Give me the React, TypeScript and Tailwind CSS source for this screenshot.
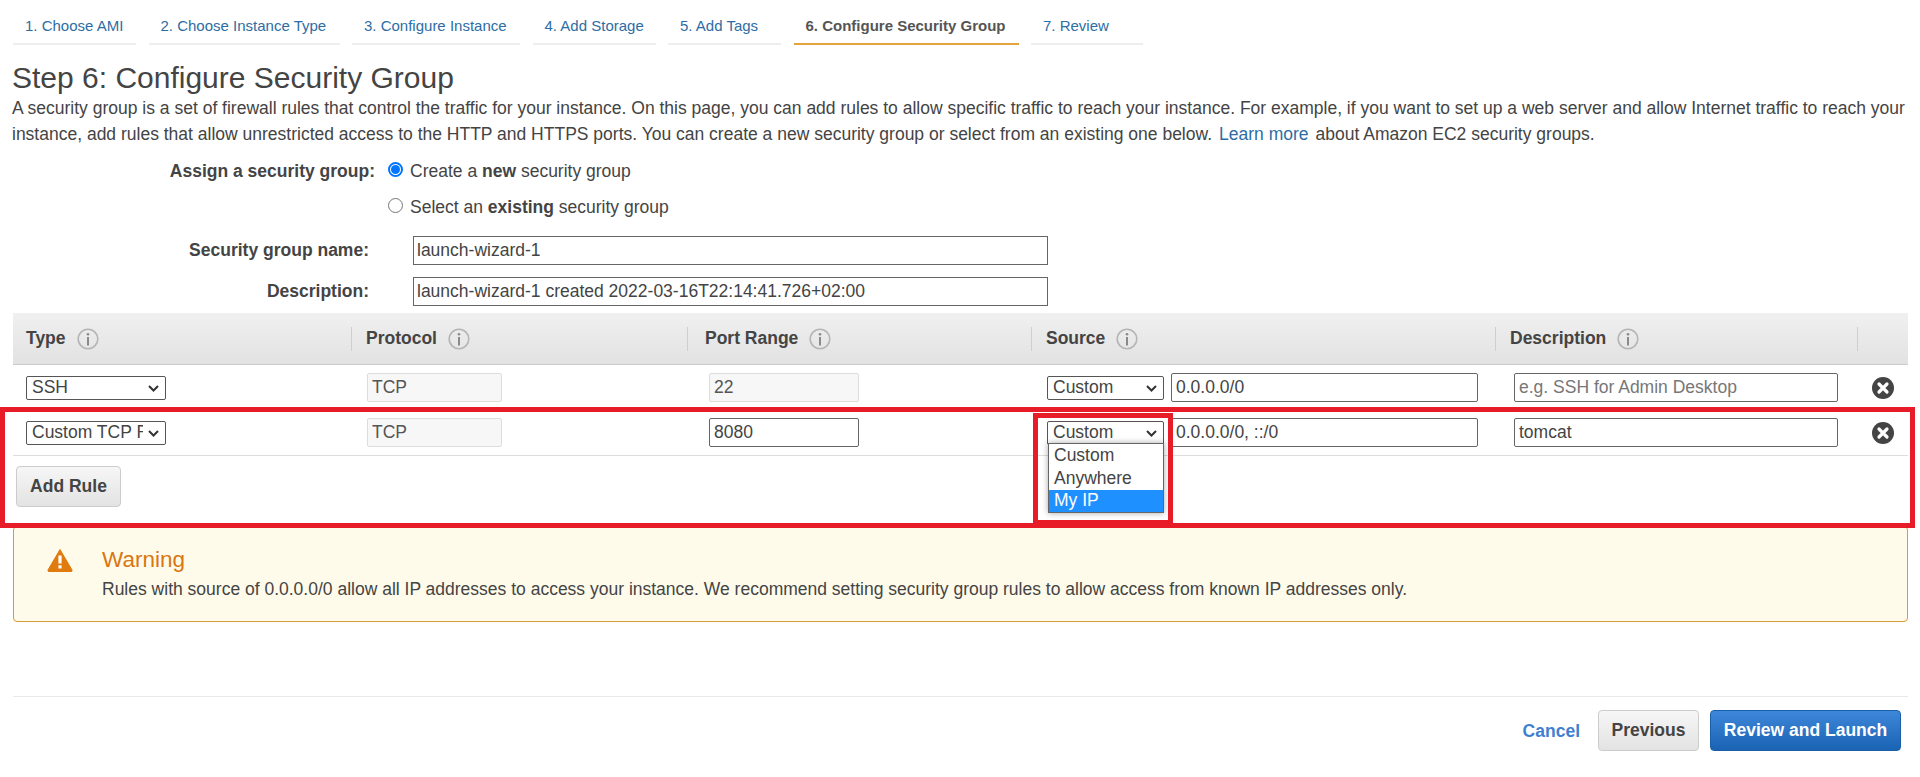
import { ReactNode } from "react";

const tabs = [
  { label: "1. Choose AMI", w: "w-[123px]" },
  { label: "2. Choose Instance Type", w: "w-[191px]" },
  { label: "3. Configure Instance", w: "w-[168px]" },
  { label: "4. Add Storage", w: "w-[123px]" },
  { label: "5. Add Tags", w: "w-[113px]" },
  { label: "6. Configure Security Group", w: "w-[225px]", active: true },
  { label: "7. Review", w: "w-[112px]" },
];

const fieldCls =
  "h-[29px] border border-[#666] rounded-[2px] px-[4px] text-[17.5px] text-[#444] bg-white placeholder:text-[#777]";
const lockedCls =
  "h-[29px] border border-[#ddd] rounded-[2px] px-[4px] text-[17.5px] text-[#555] bg-[#f7f7f7]";
const selectCls =
  "appearance-none h-[24px] border border-[#555] rounded-[2px] pl-[5px] pr-[22px] pb-[2px] text-[17.5px] leading-[20px] text-[#444] bg-white";

function InfoIcon() {
  return (
    <svg width="22" height="22" viewBox="0 0 22 22" className="shrink-0">
      <circle cx="11" cy="11" r="9.8" fill="none" stroke="#b5b5b5" strokeWidth="1.6" />
      <circle cx="11" cy="6.2" r="1.3" fill="#8a8a8a" />
      <rect x="10" y="9" width="2" height="8.5" fill="#8a8a8a" />
    </svg>
  );
}

function RemoveIcon() {
  return (
    <svg width="22" height="22" viewBox="0 0 22 22">
      <circle cx="11" cy="11" r="11" fill="#444" />
      <path d="M7 7l8 8M15 7l-8 8" stroke="#fff" strokeWidth="3.2" strokeLinecap="round" />
    </svg>
  );
}

function WarningIcon() {
  return (
    <svg width="26" height="24" viewBox="0 0 26 24">
      <path
        d="M13 1.5 L25 22 Q25.5 23.5 24 23.5 L2 23.5 Q0.5 23.5 1 22 Z"
        fill="#e07b0f"
        stroke="#e07b0f"
        strokeLinejoin="round"
      />
      <rect x="11.4" y="7.5" width="3.2" height="8" fill="#fff" />
      <rect x="11.4" y="17.3" width="3.2" height="3.2" fill="#fff" />
    </svg>
  );
}

function Radio({ checked }: { checked?: boolean }) {
  return (
    <span
      className={
        checked
          ? "w-[15px] h-[15px] rounded-full border-2 border-[#0075ff] flex items-center justify-center bg-white"
          : "w-[15px] h-[15px] rounded-full border border-[#767676] bg-white"
      }
    >
      {checked && <span className="w-[9px] h-[9px] rounded-full bg-[#0075ff]" />}
    </span>
  );
}

function Select({ value, options, width }: { value: string; options: string[]; width: string }) {
  return (
    <span className="relative inline-flex">
      <select defaultValue={value} className={`${selectCls} ${width}`}>
        {options.map((o) => (
          <option key={o}>{o}</option>
        ))}
      </select>
      <svg width="11" height="7" viewBox="0 0 11 7" className="absolute right-[7px] top-[9px] pointer-events-none">
        <path d="M1 1l4.5 4.5L10 1" fill="none" stroke="#333" strokeWidth="2" />
      </svg>
    </span>
  );
}

function HeaderCell({ children, pad = "pl-[14px]", divider = true }: { children?: ReactNode; pad?: string; divider?: boolean }) {
  return (
    <div
      className={`h-[24px] flex items-center gap-[11px] font-bold text-[17.5px] text-[#444] ${pad} ${divider ? "border-r border-[#cfcfcf]" : ""}`}
    >
      {children}
    </div>
  );
}

function Rule({ type, port, portLocked, source, description, open }: {
  type: string;
  port: string;
  portLocked?: boolean;
  source: string;
  description?: string;
  open?: boolean;
}) {
  return (
    <div className="grid grid-cols-[339px_336px_344px_464px_362px_50px] h-[45px] items-center">
      <div className="pl-[13px] flex">
        <Select value={type} options={["SSH", "Custom TCP Rule"]} width="w-[140px]" />
      </div>
      <div className="pl-[15px]">
        <input readOnly value="TCP" className={`${lockedCls} w-[135px]`} />
      </div>
      <div className="pl-[21px]">
        <input readOnly value={port} className={portLocked ? `${lockedCls} w-[150px]` : `${fieldCls} w-[150px]`} />
      </div>
      <div className="pl-[15px] flex items-center gap-[7px] relative">
        <Select value="Custom" options={["Custom", "Anywhere", "My IP"]} width="w-[117px]" />
        <input readOnly value={source} className={`${fieldCls} w-[307px]`} />
        {open && (
          <div className="absolute left-[16px] top-[25px] w-[116px] h-[70px] bg-white border border-[#666] shadow-[0_0_6px_rgba(0,0,0,0.35)] text-[17.5px] text-[#444] z-10">
            <div className="h-[23px] leading-[23px] pl-[5px]">Custom</div>
            <div className="h-[23px] leading-[23px] pl-[5px]">Anywhere</div>
            <div className="h-[22px] leading-[21px] pl-[5px] bg-[#1e90ff] text-white">My IP</div>
          </div>
        )}
      </div>
      <div className="pl-[18px]">
        <input
          readOnly
          value={description ?? ""}
          placeholder="e.g. SSH for Admin Desktop"
          className={`${fieldCls} w-[324px]`}
        />
      </div>
      <div className="pl-[14px] flex">
        <RemoveIcon />
      </div>
    </div>
  );
}

export default function App() {
  return (
    <div className="relative w-full h-[777px] overflow-hidden bg-white text-[#444] font-['Liberation_Sans',Arial,sans-serif] text-[17.5px]">
      {/* wizard steps */}
      <nav className="flex gap-[12.5px] pl-[13px] h-[45px]">
        {tabs.map((t) => (
          <div
            key={t.label}
            className={`${t.w} h-[45px] pl-[12px] pt-[16px] leading-[20px] text-[15px] border-b-2 whitespace-nowrap ${
              t.active ? "border-[#e5a33d] font-bold text-[#555]" : "border-[#eee] text-[#2e6da4]"
            }`}
          >
            {t.label}
          </div>
        ))}
      </nav>

      <div className="px-[13px]">
        <h1 className="mt-[15px] -ml-[1px] h-[35px] leading-[35px] text-[30px] text-[#444]">Step 6: Configure Security Group</h1>
        <p className="leading-[26px] w-[1907px] -ml-[1px]">
          A security group is a set of firewall rules that control the traffic for your instance. On this page, you can add rules to allow specific traffic to reach your instance. For example, if you want to set up a web server and allow Internet traffic to reach your instance, add rules that allow unrestricted access to the HTTP and HTTPS ports. You can create a new security group or select from an existing one below.
          <span className="text-[#2e6da4] mx-[7px]">Learn more</span>
          about Amazon EC2 security groups.
        </p>

        <div className="mt-[6px]">
          <div className="flex items-center h-[36px]">
            <label className="w-[362px] text-right font-bold">Assign a security group:</label>
            <span className="ml-[13px] flex -mt-[4px]"><Radio checked /></span>
            <span className="ml-[7px]">Create a <b>new</b> security group</span>
          </div>
          <div className="flex items-center h-[36px]">
            <span className="ml-[375px] flex -mt-[4px]"><Radio /></span>
            <span className="ml-[7px]">Select an <b>existing</b> security group</span>
          </div>
          <div className="flex items-center h-[28px] mt-[11px]">
            <label className="w-[356px] text-right font-bold">Security group name:</label>
            <input readOnly value="launch-wizard-1" className="ml-[44px] w-[635px] h-[29px] border border-[#666] px-[3px] text-[#444]" />
          </div>
          <div className="flex items-center h-[28px] mt-[13px]">
            <label className="w-[356px] text-right font-bold">Description:</label>
            <input readOnly value="launch-wizard-1 created 2022-03-16T22:14:41.726+02:00" className="ml-[44px] w-[635px] h-[29px] border border-[#666] px-[3px] text-[#444]" />
          </div>
        </div>

        {/* rules table */}
        <div className="mt-[8px] w-[1895px]">
          <div className="grid grid-cols-[339px_336px_344px_464px_362px_50px] items-center h-[52px] bg-gradient-to-b from-[#f0f0f0] to-[#e2e2e2] border-b border-[#cccccc]">
            <HeaderCell pad="pl-[13px]">Type <InfoIcon /></HeaderCell>
            <HeaderCell>Protocol <InfoIcon /></HeaderCell>
            <HeaderCell pad="pl-[17px]">Port Range <InfoIcon /></HeaderCell>
            <HeaderCell>Source <InfoIcon /></HeaderCell>
            <HeaderCell>Description <InfoIcon /></HeaderCell>
            <HeaderCell divider={false} />
          </div>
          <Rule type="SSH" port="22" portLocked source="0.0.0.0/0" />
          <div className="border-b border-[#ddd] h-[46px]">
            <Rule type="Custom TCP Rule" port="8080" source="0.0.0.0/0, ::/0" description="tomcat" open />
          </div>
          <div className="h-[70px] pt-[10px] pl-[3px]">
            <button className="w-[105px] h-[41px] rounded-[4px] border border-[#ccc] bg-gradient-to-b from-[#f6f6f6] to-[#e3e3e3] font-bold text-[#444]">
              Add Rule
            </button>
          </div>
        </div>

        {/* warning */}
        <div className="w-[1895px] h-[96px] flex border border-[#d99a3a] rounded-[4px] bg-[#fffbeb]">
          <div className="pl-[33px] pt-[21px]"><WarningIcon /></div>
          <div className="pl-[29px] pt-[20px]">
            <div className="text-[22.5px] leading-[26px] text-[#d9760f]">Warning</div>
            <div className="mt-[3px] leading-[26px] text-[#444]">
              Rules with source of 0.0.0.0/0 allow all IP addresses to access your instance. We recommend setting security group rules to allow access from known IP addresses only.
            </div>
          </div>
        </div>

        {/* footer actions */}
        <div className="mt-[74px] w-[1895px] border-t border-[#e8e8e8] flex items-center justify-end pt-[13px] pr-[7px]">
          <a className="font-bold text-[#3f7fcf] mr-[18px] mt-[2px]">Cancel</a>
          <button className="w-[101px] h-[41px] rounded-[4px] border border-[#ccc] bg-gradient-to-b from-[#f6f6f6] to-[#e3e3e3] font-bold text-[#444] mr-[11px]">
            Previous
          </button>
          <button className="w-[191px] h-[41px] rounded-[4px] border border-[#1a5fa8] bg-gradient-to-b from-[#3d87da] to-[#1a63b3] font-bold text-white">
            Review and Launch
          </button>
        </div>
      </div>

      {/* red annotation boxes drawn over the screenshot */}
      <div className="absolute left-0 top-[407px] w-[1915px] h-[121px] border-[5px] border-[#e81c28] pointer-events-none z-20" />
      <div className="absolute left-[1033px] top-[413px] w-[140px] h-[112px] border-[5px] border-[#e81c28] pointer-events-none z-20" />
    </div>
  );
}
